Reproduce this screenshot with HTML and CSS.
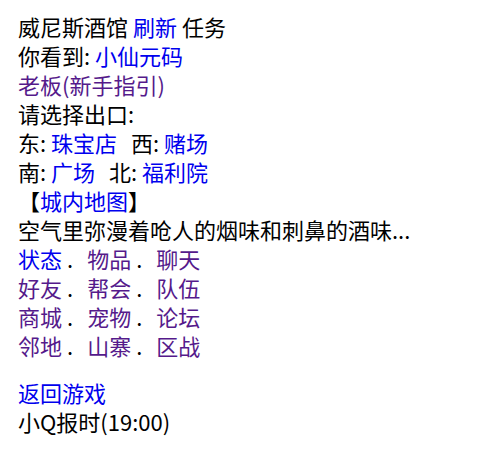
FILE: index.html
```html
<!DOCTYPE html>
<html lang="zh-CN">
<head>
<meta charset="utf-8">
<title>威尼斯酒馆</title>
<link rel="stylesheet" href="styles.css">
</head>
<body>
<div class="page">
  <div class="line">威尼斯酒馆 <a class="link" href="#">刷新</a> 任务</div>
  <div class="line">你看到: <a class="link" href="#">小仙元码</a></div>
  <div class="line"><a class="link visited" href="#">老板(新手指引)</a></div>
  <div class="line">请选择出口:</div>
  <div class="line">东: <a class="link" href="#">珠宝店</a><span class="gap"></span>西: <a class="link" href="#">赌场</a></div>
  <div class="line">南: <a class="link" href="#">广场</a><span class="gap"></span>北: <a class="link" href="#">福利院</a></div>
  <div class="line">【<a class="link" href="#">城内地图</a>】</div>
  <div class="line">空气里弥漫着呛人的烟味和刺鼻的酒味...</div>
  <div class="line"><a class="link" href="#">状态</a><span class="sep">.</span><a class="link visited" href="#">物品</a><span class="sep">.</span><a class="link visited" href="#">聊天</a></div>
  <div class="line"><a class="link visited" href="#">好友</a><span class="sep">.</span><a class="link visited" href="#">帮会</a><span class="sep">.</span><a class="link visited" href="#">队伍</a></div>
  <div class="line"><a class="link visited" href="#">商城</a><span class="sep">.</span><a class="link visited" href="#">宠物</a><span class="sep">.</span><a class="link visited" href="#">论坛</a></div>
  <div class="line"><a class="link visited" href="#">邻地</a><span class="sep">.</span><a class="link visited" href="#">山寨</a><span class="sep">.</span><a class="link visited" href="#">区战</a></div>
  <div class="line spaced"><a class="link" href="#">返回游戏</a></div>
  <div class="line">小Q报时(19:00)</div>
</div>
</body>
</html>
```
FILE: styles.css
```css
html, body {
  margin: 0;
  padding: 0;
  background: #ffffff;
}
body {
  font-family: "Noto Sans CJK SC", "Noto Sans", sans-serif;
  font-size: 22px;
  color: #000000;
}
.page {
  padding: 12px 18px;
}
.line {
  line-height: 29px;
  height: 29px;
  white-space: nowrap;
}
.spaced {
  margin-top: 18px;
}
.link {
  color: #0000ee;
  text-decoration: none;
}
.link.visited {
  color: #551a8b;
}
.gap {
  display: inline-block;
  width: 14px;
}
.sep {
  display: inline-block;
  padding-left: 5px;
  padding-right: 14px;
}
```
